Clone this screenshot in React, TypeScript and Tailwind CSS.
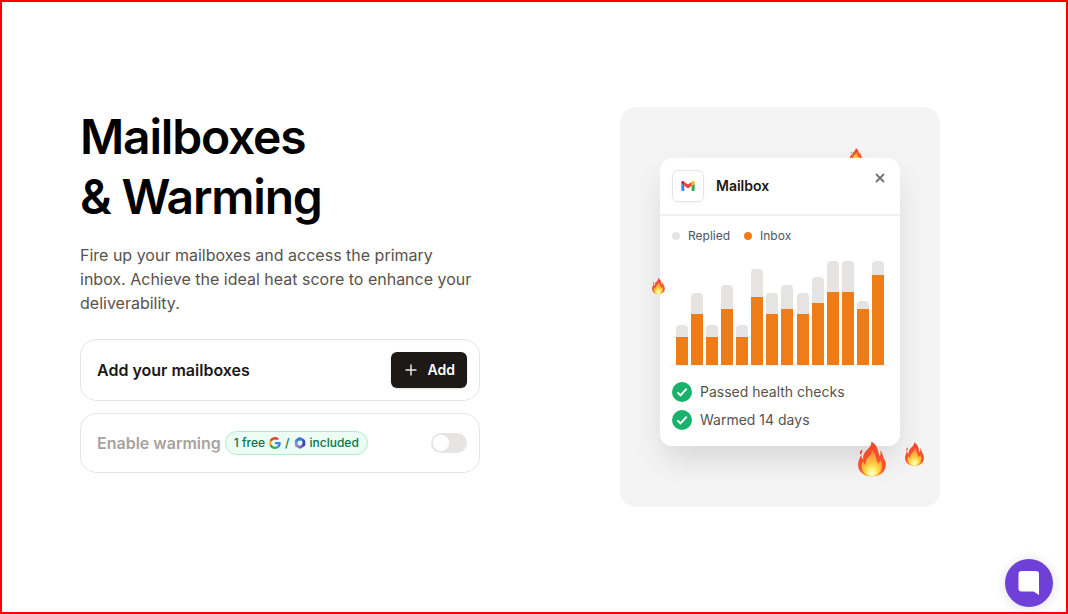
import React, { useState } from "react";

const bars = [
    { total: 40, inbox: 28 },
    { total: 72, inbox: 51 },
    { total: 40, inbox: 28 },
    { total: 80, inbox: 56 },
    { total: 40, inbox: 28 },
    { total: 96, inbox: 68 },
    { total: 72, inbox: 51 },
    { total: 80, inbox: 56 },
    { total: 72, inbox: 51 },
    { total: 88, inbox: 62 },
    { total: 104, inbox: 73 },
    { total: 104, inbox: 73 },
    { total: 64, inbox: 56 },
    { total: 104, inbox: 90 },
];

function Flame({ className }: { className: string }) {
    return (
        <svg viewBox="0 0 28 35" className={className} aria-hidden="true">
            <defs>
                <radialGradient id="flame-outer" cx="0.5" cy="0.95" r="0.8">
                    <stop offset="0" stopColor="#ffe14a" />
                    <stop offset="0.3" stopColor="#fd9a26" />
                    <stop offset="0.55" stopColor="#f9542a" />
                    <stop offset="1" stopColor="#ef4a2a" />
                </radialGradient>
                <radialGradient id="flame-inner" cx="0.5" cy="0.92" r="0.9">
                    <stop offset="0" stopColor="#fffde0" />
                    <stop offset="0.22" stopColor="#fff27a" />
                    <stop offset="0.45" stopColor="#ffcc3c" />
                    <stop offset="0.75" stopColor="#ff9a45" />
                    <stop offset="1" stopColor="#fb6a38" />
                </radialGradient>
            </defs>
            <path
                fill="url(#flame-outer)"
                d="M13.2 0C20 3.6 19.7 9.3 21.6 14.8C23 13.5 22.8 10.9 22 8.8C24.5 10.7 24.5 14 25.5 16.2C27.3 18.8 28 21.2 27.8 24C27.4 30.7 21.8 35 14 35C6 35 .3 30.5.1 23.8C0 20.2 1.4 17 3.2 13.2C3.4 15.5 4.2 17 5.2 18C4.8 12.8 6.9 10.5 9.4 8C11.6 5.8 13.8 3.5 13.2 0Z"
            />
            <path fill="#f0432a" d="M4.2 8C2.2 9.2 1.4 11 2 13C3.8 12 4.8 10.4 4.2 8Z" />
            <path
                fill="url(#flame-inner)"
                d="M13.8 8C18.6 12 17.4 17.5 20.1 22C21.5 21.1 22 19.8 22.2 18.3C24 21.1 24.500 23.7 23.7 26.4C22.5 31 18.8 34.300 14 34.400C8.500 34.300 4.400 30.800 3.700 26C3.300 23.400 4.200 21.600 5.300 20C5.800 22 6.500 23 7.800 23.800C7.400 18.900 9.100 16.900 11.400 14.500C13.100 12.700 14.200 11.300 13.800 8Z"
            />
        </svg>
    );
}

function GmailLogo() {
    return (
        <svg viewBox="0 0 24 18" className="h-[10px] w-[14px]" aria-hidden="true">
            <path fill="#4285f4" d="M1.6 18h3.9V8.7L0 4.5v11.9C0 17.3.7 18 1.6 18z" />
            <path fill="#34a853" d="M18.5 18h3.9c.9 0 1.6-.7 1.6-1.6V4.5l-5.5 4.2z" />
            <path fill="#fbbc04" d="M18.5 1.6v7.1L24 4.5V2.4c0-2-2.3-3.2-3.9-2z" />
            <path fill="#ea4335" d="M5.5 8.7V1.6L12 6.5l6.5-4.9v7.1L12 13.6z" />
            <path fill="#c5221f" d="M0 2.4v2.1l5.5 4.2V1.6L3.9.4C2.3-.8 0 .4 0 2.4z" />
        </svg>
    );
}

function GoogleLogo() {
    return (
        <svg viewBox="0 0 48 48" className="size-3" role="img" aria-label="Google">
            <path fill="#ea4335" d="M24 9.5c3.5 0 6.7 1.2 9.2 3.6l6.9-6.9C35.9 2.4 30.5 0 24 0 14.6 0 6.5 5.4 2.6 13.2l8 6.2C12.4 13.7 17.7 9.5 24 9.5z" />
            <path fill="#4285f4" d="M47 24.6c0-1.6-.2-3.1-.4-4.6H24v9h12.9c-.6 3-2.2 5.5-4.7 7.2l7.7 6c4.5-4.2 7.1-10.4 7.1-17.6z" />
            <path fill="#fbbc05" d="M10.5 28.6c-.5-1.5-.8-3-.8-4.6s.3-3.1.8-4.6l-8-6.2C.9 16.5 0 20.1 0 24s.9 7.5 2.6 10.8z" />
            <path fill="#34a853" d="M24 48c6.5 0 11.9-2.1 15.9-5.8l-7.7-6c-2.2 1.5-4.9 2.3-8.2 2.3-6.3 0-11.6-4.2-13.5-9.9l-8 6.2C6.5 42.6 14.6 48 24 48z" />
        </svg>
    );
}

function MicrosoftLogo() {
    return (
        <svg viewBox="0 0 24 24" className="size-3" role="img" aria-label="Microsoft 365">
            <defs>
                <linearGradient id="ms-left" x1="0.8" y1="0" x2="0.2" y2="1">
                    <stop offset="0" stopColor="#2b45b5" />
                    <stop offset="0.45" stopColor="#4a8fe0" />
                    <stop offset="1" stopColor="#a78be8" />
                </linearGradient>
                <linearGradient id="ms-right" x1="0" y1="0" x2="1" y2="1">
                    <stop offset="0" stopColor="#3fa0e6" />
                    <stop offset="0.5" stopColor="#3f55c4" />
                    <stop offset="1" stopColor="#33328f" />
                </linearGradient>
                <linearGradient id="ms-bottom" x1="0" y1="0" x2="1" y2="0">
                    <stop offset="0" stopColor="#b58aec" />
                    <stop offset="1" stopColor="#4a45a8" />
                </linearGradient>
            </defs>
            <path fill="url(#ms-left)" d="M13 .5C8.500 .5 7 2.500 4.500 4C2.500 5.200 1.500 6.500 1.500 9v6c0 3 2 4.500 4 5.300L8 15.500L6.500 12.500L9.500 7.500L14 6.500z" />
            <path fill="url(#ms-right)" d="M11.500 .5c3 0 4.500 1.500 7.500 3.500c2.500 1.500 3.500 3 3.500 5.500v5c0 2-1 3.500-3 4.500L15 16L17.500 11.500L15 7L10.500 6.500C10 4.500 10 2 11.500 .5z" />
            <path fill="url(#ms-bottom)" d="M1.800 16.500C3 18.500 5 18 7.500 15L10.500 17.300L15 16.500L22 15.500c0 2-1 3-3 4l-4.500 3c-2 1.300-3.500 1.300-5.500 0l-4.500-3c-1.500-1-2.300-1.500-2.700-3z" />
        </svg>
    );
}

function CheckItem({ children }: { children: React.ReactNode }) {
    return (
        <li className="flex items-center gap-2 text-sm leading-5 text-[#57534e]">
            <svg viewBox="0 0 20 20" className="size-5" aria-hidden="true">
                <circle cx="10" cy="10" r="10" fill="#19b26b" />
                <path d="M5.5 10.4l3 3l6.200-6.800" fill="none" stroke="#fff" strokeWidth="1.900" />
            </svg>
            {children}
        </li>
    );
}

function MailboxCard() {
    return (
        <div className="relative rounded-xl bg-white shadow-[0_16px_32px_-4px_rgba(0,0,0,0.13)]">
            <div className="flex items-center gap-3 border-b-2 border-[#f0f0f0] p-3">
                <div className="flex size-8 items-center justify-center rounded-md border border-[#e7e5e4] shadow-xs">
                    <GmailLogo />
                </div>
                <h2 className="grow text-sm font-semibold text-[#1c1917]">Mailbox</h2>
                <button type="button" aria-label="Close" className="-mt-4 p-[3px]">
                    <svg viewBox="0 0 10 10" className="size-[10px]" aria-hidden="true">
                        <path d="M1 1l8 8M9 1L1 9" stroke="#78716c" strokeWidth="1.8" />
                    </svg>
                </button>
            </div>

            <div className="px-3 pt-3 pb-4">
                <div className="flex gap-[14px] text-xs leading-4 text-[#4b5563]">
                    <span className="flex items-center gap-2">
                        <span className="size-2 rounded-full bg-[#e5e5e4]" />
                        Replied
                    </span>
                    <span className="flex items-center gap-2">
                        <span className="size-2 rounded-full bg-[#ee7d17]" />
                        Inbox
                    </span>
                </div>

                {/* Chart */}
                <div className="mt-[17px] -mx-[2px] flex items-end justify-between border-b border-[#f0f0f0] px-[6px]">
                    {bars.map((bar, i) => (
                        <div
                            key={i}
                            className="flex w-3 flex-col justify-end overflow-hidden rounded-t bg-[#e5e4e2]"
                            style={{ height: bar.total }}
                        >
                            <div className="bg-[#ee7d17]" style={{ height: bar.inbox }} />
                        </div>
                    ))}
                </div>

                <ul className="mt-4 space-y-2">
                    <CheckItem>Passed health checks</CheckItem>
                    <CheckItem>Warmed 14 days</CheckItem>
                </ul>
            </div>
        </div>
    );
}

function App() {
    const [warming, setWarming] = useState(false);

    return (
        <div className="flex min-h-screen items-center border-2 border-[#f00] bg-white px-[78px] font-['Inter',sans-serif]">
            <main className="flex w-full items-start gap-[140px]">
                <section className="w-full max-w-[400px]">
                    <h1 className="text-5xl leading-[60px] font-semibold tracking-tight text-black">
                        Mailboxes
                        <br />& Warming
                    </h1>
                    <p className="mt-4 text-base leading-6 text-[#57534e]">
                        Fire up your mailboxes and access the primary inbox. Achieve the ideal heat score to
                        enhance your deliverability.
                    </p>

                    <div className="mt-6 flex items-center justify-between rounded-2xl border border-[#e5e5e5] p-3 pl-4">
                        <h3 className="text-base font-semibold text-[#1c1917]">Add your mailboxes</h3>
                        <button
                            type="button"
                            className="flex h-9 items-center gap-[9px] rounded-md bg-[#1c1917] px-3 text-sm font-semibold text-white shadow-sm"
                        >
                            <svg viewBox="0 0 16 16" className="size-4" aria-hidden="true">
                                <path d="M8 2.5v11M2.5 8h11" stroke="#e7e5e4" strokeWidth="1.5" />
                            </svg>
                            Add
                        </button>
                    </div>

                    <div className="mt-3 flex h-[60px] items-center justify-between rounded-2xl border border-[#e5e5e5] pr-3 pl-4">
                        <div className="flex items-center gap-1">
                            <label htmlFor="warming" className="text-base font-semibold text-[#a8a29e]">
                                Enable warming
                            </label>
                            <span className="flex h-6 items-center gap-1 rounded-full border border-[#abefc6] bg-[#ecfdf3] px-2 text-xs font-medium text-[#067647]">
                                1 free <GoogleLogo /> / <MicrosoftLogo /> included
                            </span>
                        </div>
                        <input
                            id="warming"
                            type="checkbox"
                            checked={warming}
                            onChange={(e) => setWarming(e.target.checked)}
                            className="h-5 w-9 appearance-none rounded-full bg-[#e7e5e4] p-[2px] before:block before:size-4 before:rounded-full before:bg-white checked:bg-[#19b26b] checked:before:ml-4"
                        />
                    </div>
                </section>

                <section className="relative flex h-[400px] w-80 shrink-0 flex-col justify-center rounded-2xl bg-[#f4f4f4] px-10 pb-[10px]">
                    <Flame className="absolute top-[41px] left-[230px] h-[15px] w-3" />
                    <MailboxCard />
                    <Flame className="absolute top-[171px] left-8 h-4 w-[13px]" />
                    <Flame className="absolute top-[334px] left-[238px] h-9 w-7" />
                    <Flame className="absolute top-[335px] left-[285px] h-6 w-[19px]" />
                </section>
            </main>

            <button
                type="button"
                aria-label="Open chat"
                className="fixed right-[15px] bottom-[7px] flex size-12 items-center justify-center rounded-full bg-[#6e40d8] shadow-[0_1px_12px_rgba(0,0,0,0.14)]"
            >
                <svg viewBox="0 0 22 24" className="h-6 w-[22px]" aria-hidden="true">
                    <path fill="#fff" d="M3.5 0h14.5a3 3 0 0 1 3 3v21l-5.5-3.5h-12a3 3 0 0 1-3-3v-14.500a3 3 0 0 1 3-3z" />
                </svg>
            </button>
        </div>
    );
}

export default App;
